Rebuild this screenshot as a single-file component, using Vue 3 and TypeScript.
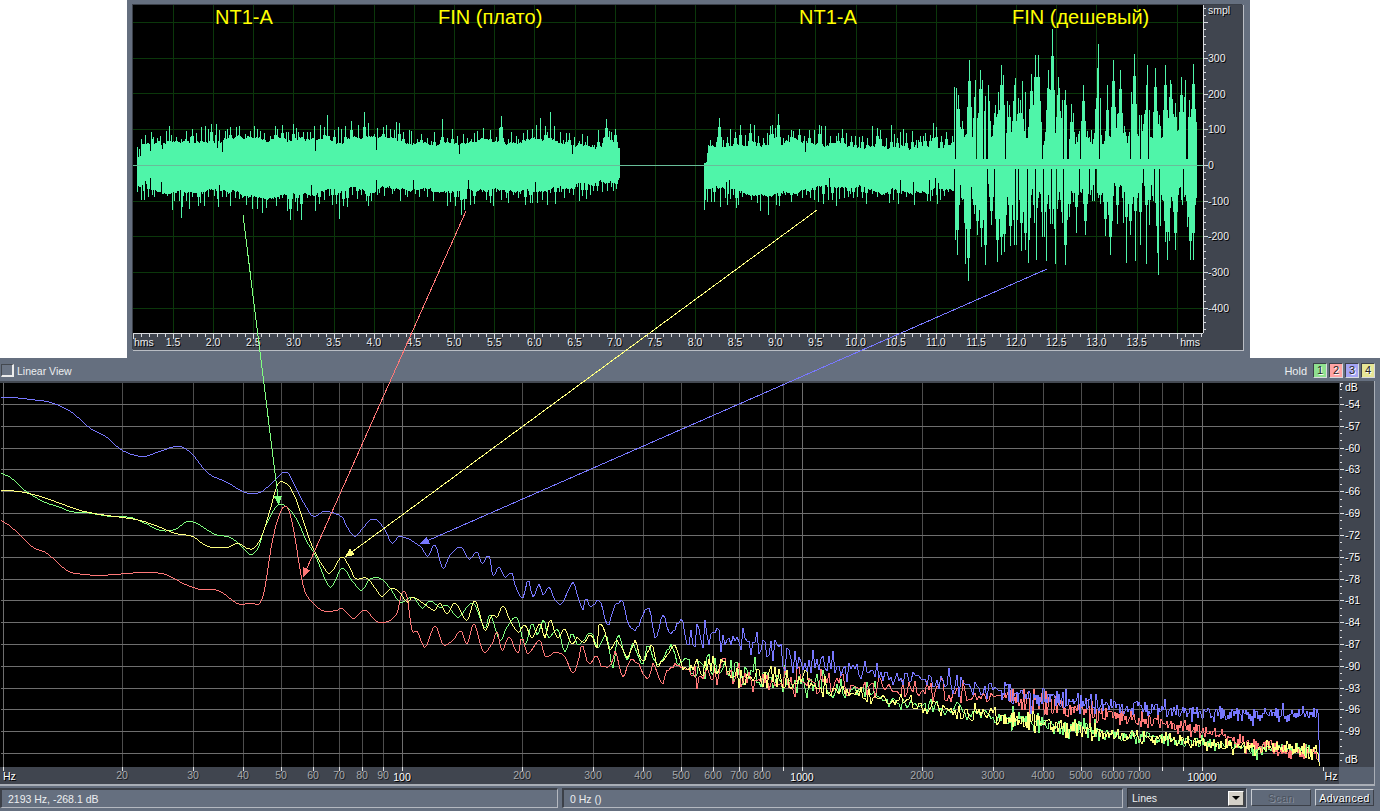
<template>
  <div class="page">
    <section class="wave-window">
      <div class="wave-frame">
        <div class="wave-plot">
          <svg class="fill" viewBox="133 5 1070 328" shape-rendering="crispEdges">
            <path :d="waveGrid" stroke="#0b370b" fill="none" />
            <path :d="wavePath" stroke="#4ff5a9" fill="none" />
            <path d="M133 165.5H1203" stroke="#68bd99" fill="none" />
          </svg>
          <span v-for="t in waveTitles" :key="t.x" class="wave-title" :style="{ left: t.x - 133 + 'px' }">{{ t.text }}</span>
        </div>
        <div class="axis wave-right">
          <svg class="fill" viewBox="1203 5 40 328" shape-rendering="crispEdges">
            <path :d="waveRightTicks" stroke="#d8dade" fill="none" />
          </svg>
          <span class="lbl" style="top: -1px">smpl</span>
          <span v-for="l in waveRightLabels" :key="l.text" class="lbl mid" :style="{ top: l.y - 5 + 'px' }">{{ l.text }}</span>
        </div>
        <div class="axis wave-bottom">
          <svg class="fill" viewBox="133 333 1070 17" shape-rendering="crispEdges">
            <path :d="waveBottomTicks" stroke="#d8dade" fill="none" />
          </svg>
          <span class="lbl" style="left: 1px; top: 3px">hms</span>
          <span v-for="l in waveBottomLabels" :key="l.text" class="lbl center" :style="{ left: l.x - 133 + 'px' }">{{ l.text }}</span>
          <span class="lbl" style="right: 3px; top: 3px">hms</span>
        </div>
        <div class="wave-corner"></div>
      </div>
    </section>

    <section class="spec-window">
      <div class="toolbar">
        <label class="linear"><span class="check"></span>Linear View</label>
        <div class="hold">
          <span class="hold-text">Hold</span>
          <button v-for="b in holdButtons" :key="b.n" class="hold-btn" :class="b.cls">{{ b.n }}</button>
        </div>
      </div>
      <div class="spec-frame">
        <div class="spec-plot">
          <svg class="fill" viewBox="0 383 1339 384" shape-rendering="crispEdges">
            <path :d="specGridMinor" stroke="#4d4d4d" fill="none" />
            <path :d="specGridMajor" stroke="#6e6e6e" fill="none" />
            <polyline v-for="c in curves" :key="c.color" :points="c.points" :stroke="c.color" fill="none" />
          </svg>
        </div>
        <div class="axis spec-right">
          <svg class="fill" viewBox="1339 383 35 384" shape-rendering="crispEdges">
            <path :d="specRightTicks" stroke="#e4e4e4" fill="none" />
          </svg>
          <span class="lbl bright" style="top: -2px">dB</span>
          <span v-for="l in specRightLabels" :key="l.text" class="lbl bright mid" :style="{ top: l.y - 383 + 'px' }">{{ l.text }}</span>
          <span class="lbl bright mid" style="top: 376px">dB</span>
        </div>
        <div class="axis spec-bottom">
          <svg class="fill" viewBox="0 767 1339 17" shape-rendering="crispEdges">
            <path :d="specBottomTicks" stroke="#e4e4e4" fill="none" />
          </svg>
          <span class="lbl bright" style="left: 3px; top: 3px">Hz</span>
          <span
            v-for="l in specBottomLabels"
            :key="l.text"
            class="lbl center"
            :class="l.major ? 'major' : 'dim'"
            :style="{ left: l.x + 'px' }"
          >{{ l.text }}</span>
          <span class="lbl bright center" style="left: 1331px; top: 3px">Hz</span>
        </div>
        <div class="spec-corner"></div>
      </div>
      <div class="status-row">
        <div class="status first">2193 Hz, -268.1 dB</div>
        <div class="status second">0 Hz ()</div>
        <div class="select">
          <span>Lines</span>
          <span class="select-btn"><i></i></span>
        </div>
        <button class="btn scan" disabled>Scan</button>
        <button class="btn adv">Advanced</button>
      </div>
    </section>

    <svg class="arrows" viewBox="0 0 1380 811" shape-rendering="crispEdges">
      <g v-for="a in arrows" :key="a.color">
        <line :x1="a.x1" :y1="a.y1" :x2="a.x2" :y2="a.y2" :stroke="a.color" />
        <polygon :points="arrowHead(a)" :fill="a.color" />
      </g>
    </svg>
  </div>
</template>

<script setup lang="ts">
type Pt = [number, number]
type Arrow = { x1: number; y1: number; x2: number; y2: number; color: string }

function rng(seed: number) {
  let a = seed
  return () => {
    a = (a + 0x6d2b79f5) | 0
    let t = Math.imul(a ^ (a >>> 15), 1 | a)
    t = (t + Math.imul(t ^ (t >>> 7), 61 | t)) ^ t
    return ((t ^ (t >>> 14)) >>> 0) / 4294967296
  }
}

function lerp(keys: Pt[], x: number) {
  if (x <= keys[0][0]) return keys[0][1]
  for (let i = 1; i < keys.length; i++) {
    if (x <= keys[i][0]) {
      const [x0, y0] = keys[i - 1]
      const [x1, y1] = keys[i]
      return y0 + ((y1 - y0) * (x - x0)) / (x1 - x0)
    }
  }
  return keys[keys.length - 1][1]
}

// ---------- waveform ----------
const waveTitles = [
  { x: 215, text: 'NT1-A' },
  { x: 438, text: 'FIN (плато)' },
  { x: 799, text: 'NT1-A' },
  { x: 1012, text: 'FIN (дешевый)' }
]
const waveX = (i: number) => 173 + 40.15 * i
const smplY = [22, 58, 93, 129, 165, 201, 236, 272, 308]

let gridD = ''
for (let i = 0; i <= 25; i++) gridD += `M${Math.round(waveX(i)) + 0.5} 5V333`
for (const y of smplY) gridD += `M133 ${y + 0.5}H1203`
const waveGrid = gridD

// one side of the signal: pointed fingers of random height, laid over each other
function fingers(x0: number, x1: number, height: (x: number) => number, every: number, width: number, r: () => number) {
  const out = new Array(x1 - x0).fill(0)
  let x = x0
  while (x < x1) {
    const h = height(x)
    const w = 1.5 + width * r()
    for (let d = -6; d <= 6; d++) {
      const i = Math.round(x) + d - x0
      if (i < 0 || i >= out.length) continue
      out[i] = Math.max(out[i], h * Math.max(0, 1 - Math.abs(d) / w))
    }
    x += 2 + every * r()
  }
  return out
}

function quietSection(x0: number, x1: number, top: Pt[], bot: Pt[], seed: number) {
  const r = rng(seed)
  let wt = 0
  let wb = 0
  const side = (keys: Pt[]) => (x: number) => {
    const a = lerp(keys, x)
    const c = r()
    return a * (0.72 + 0.38 * r()) * (c < 0.09 ? 1.32 : 1)
  }
  const up = fingers(x0, x1, side(top), 4, 4, r)
  const down = fingers(x0, x1, side(bot), 4, 4, r)
  let d = ''
  for (let x = x0; x < x1; x++) {
    wt = wt * 0.97 + (r() - 0.5) * 3
    wb = wb * 0.97 + (r() - 0.5) * 3
    let t = Math.max(up[x - x0], lerp(top, x) * 0.62 + wt)
    let b = Math.max(down[x - x0], lerp(bot, x) * 0.66 + wb)
    // thin black notches cut into the body now and then
    if (r() < 0.03) t *= 0.55
    if (r() < 0.03) b *= 0.6
    d += `M${x + 0.5} ${Math.round(165 - t)}V${Math.round(165 + b)}`
  }
  return d
}

const topSpikes: Pt[] = [[953, 97], [958, 70], [969, 105], [975, 85], [980, 95], [988, 80], [995, 60], [1001, 100], [1009, 60], [1014, 80], [1020, 65], [1035, 110], [1038, 110], [1048, 95], [1052, 136], [1058, 88], [1065, 75], [1083, 80], [1098, 121], [1113, 105], [1120, 95], [1134, 111], [1147, 100], [1155, 97], [1165, 100], [1170, 85], [1185, 85], [1193, 101]]
const botSpikes: Pt[] = [[955, 75], [968, 116], [977, 70], [985, 100], [1001, 90], [1015, 100], [1025, 85], [1035, 72], [1055, 80], [1065, 100], [1085, 70], [1110, 90], [1130, 70], [1158, 110], [1175, 85], [1190, 95]]

function spikeAt(list: Pt[], x: number, v: number) {
  let out = v
  for (const s of list) {
    const d = Math.abs(x - s[0])
    if (d === 0) out = Math.max(out, s[1])
    else if (d === 1) out = Math.max(out, s[1] * 0.8)
    else if (d === 2) out = Math.max(out, s[1] * 0.55)
  }
  return out
}

function loudSection(x0: number, x1: number, seed: number) {
  const r = rng(seed)
  const up = fingers(x0, x1, () => 34 + 58 * r(), 6, 4, r)
  const down = fingers(x0, x1, () => 34 + 66 * r(), 6, 4, r)
  let d = ''
  for (let x = x0; x < x1; x++) {
    const slitT = r() < 0.06
    const slitB = r() < 0.08
    const t = slitT ? 6 : spikeAt(topSpikes, x, Math.max(up[x - x0], 20 + 14 * r()))
    const b = slitB ? 4 : spikeAt(botSpikes, x, Math.max(down[x - x0], 18 + 18 * r()))
    d += `M${x + 0.5} ${Math.round(165 - t)}V${Math.round(165 + b)}`
  }
  return d
}

const wavePath =
  quietSection(137, 620,
    [[137, 20], [145, 34], [240, 40], [290, 40], [362, 36], [375, 43], [395, 43], [412, 34], [445, 32], [480, 35], [520, 36], [552, 38], [575, 31], [600, 33], [620, 34]],
    [[137, 32], [240, 44], [290, 44], [360, 38], [400, 33], [460, 38], [560, 36], [620, 27]], 11) +
  quietSection(704, 707, [[704, 1], [707, 1]], [[704, 36], [707, 40]], 5) +
  quietSection(707, 954,
    [[707, 30], [742, 38], [800, 37], [860, 35], [900, 38], [954, 36]],
    [[707, 40], [800, 37], [880, 36], [954, 36]], 23) +
  loudSection(954, 1197, 37)

let rightD = 'M1203.5 5V333'
for (let i = -2; i <= 44; i++) {
  const y = Math.round(165 + 7.14 * (i - 20) * 1)
  if (y < 6 || y > 332) continue
  rightD += `M1204 ${y + 0.5}H${(i - 20) % 5 === 0 ? 1208 : 1206}`
}
const waveRightTicks = rightD
const waveRightLabels = [300, 200, 100, 0, -100, -200, -300, -400].map((v) => ({
  text: String(v),
  y: 165 - v * 0.357
}))

let bottomD = 'M133 333.5H1203'
for (let i = -5; i < 130; i++) {
  const x = Math.round(173 + 8.03 * i)
  if (x < 133 || x > 1202) continue
  bottomD += `M${x + 0.5} 334V${i % 5 === 0 ? 339 : 337}`
}
const waveBottomTicks = bottomD
const waveBottomLabels = Array.from({ length: 25 }, (_, i) => ({
  text: (1.5 + i * 0.5).toFixed(1),
  x: waveX(i)
}))

// ---------- spectrum ----------
const decade = [0, 119, 190, 240, 278, 310, 336, 359, 380.5, 399.5]
const hz: { x: number; f: number }[] = [{ x: 3, f: 10 }]
for (let k = 0; k < 3; k++) {
  for (let m = 1; m < 10; m++) {
    hz.push({ x: Math.round(2.8 + decade[m] + k * 400), f: (m + 1) * 10 * 10 ** k })
  }
}
const hidden = [900, 8000, 9000]
const specBottomLabels = hz
  .filter((h) => h.f !== 10 && !hidden.includes(h.f))
  .map((h) => ({ text: String(h.f), x: h.x, major: h.f === 100 || h.f === 1000 || h.f === 10000 }))

const dbY: number[] = []
for (let i = 0; i <= 16; i++) dbY.push(Math.round(404 + 21.82 * i))
let minorD = ''
let majorD = ''
for (const h of hz) {
  const seg = `M${h.x + 0.5} 383V767`
  if (h.f === 100 || h.f === 1000 || h.f === 10000 || h.f === 10) majorD += seg
  else minorD += seg
}
for (const y of dbY) majorD += `M1 ${y + 0.5}H1339`
const specGridMinor = minorD
const specGridMajor = majorD

const specRightLabels = dbY.slice(0, 16).map((y, i) => ({ text: String(-54 - i * 3), y }))
let sr = 'M1340 383.5H1343M1340 383V387'
for (let i = -1; i < 17; i++) {
  const y = 404 + 21.82 * i
  if (i >= 0) sr += `M1340 ${Math.round(y) + 0.5}H1344`
  for (const k of [7.3, 14.6]) {
    const yy = Math.round(y + k)
    if (yy > 384 && yy < 766) sr += `M1340 ${yy + 0.5}H1342`
  }
}
const specRightTicks = sr

let sb = ''
for (const h of hz) sb += `M${h.x + 0.5} 767V771`
sb += 'M1323.5 767V771'
const specBottomTicks = sb

function catmull(keys: Pt[], x: number) {
  let i = 1
  while (i < keys.length - 1 && keys[i][0] < x) i++
  const p0 = keys[Math.max(0, i - 2)]
  const p1 = keys[i - 1]
  const p2 = keys[i]
  const p3 = keys[Math.min(keys.length - 1, i + 1)]
  const w = p2[0] - p1[0]
  const t = Math.min(1, Math.max(0, (x - p1[0]) / w))
  const m1 = ((p2[1] - p0[1]) / (p2[0] - p0[0] || 1)) * w
  const m2 = ((p3[1] - p1[1]) / (p3[0] - p1[0] || 1)) * w
  const t2 = t * t
  const t3 = t2 * t
  return (2 * t3 - 3 * t2 + 1) * p1[1] + (t3 - 2 * t2 + t) * m1 + (-2 * t3 + 3 * t2) * p2[1] + (t3 - t2) * m2
}

function buildCurve(keys: Pt[], noiseFrom: number, base: Pt[], amp: number, seed: number, dropTo: number) {
  const r = rng(seed)
  const pts: string[] = []
  let x = 1
  while (x <= 1318) {
    let y: number
    if (x < noiseFrom) {
      y = catmull(keys, x)
      // bins get denser going right, so the key points pick up a little fuzz
      if (x > 520) y += (r() - 0.5) * 6 * ((x - 520) / (noiseFrom - 520))
    } else {
      const a = amp * (x < 850 ? 1.35 : x < 1100 ? 1 : 0.72)
      const n = (r() + r() - 1) * a * 2.5
      const spike = r() < 0.07 ? (r() < 0.5 ? -1 : 1) * a * 1.3 : 0
      y = lerp(base, x) + n + spike
    }
    pts.push(`${x},${Math.round(y)}`)
    x += x < noiseFrom ? (x > 520 ? 2 : 1) : x < 1000 ? 2 : 1
  }
  pts.push(`1319,${dropTo}`, '1320,766')
  return pts.join(' ')
}

const blueKeys: Pt[] = [[1, 397], [12, 397], [30, 399], [50, 402], [70, 411], [90, 428], [105, 436], [122, 450], [143, 456], [160, 451], [178, 446], [190, 452], [208, 473], [225, 481], [245, 492], [260, 492], [272, 483], [282, 473], [288, 473], [297, 490], [305, 505], [313, 516], [325, 511], [342, 517], [347, 527], [355, 536], [363, 528], [370, 520], [377, 520], [385, 530], [392, 543], [400, 536], [420, 546], [428, 556], [435, 545], [443, 568], [450, 555], [461, 547], [469, 559], [477, 552], [482, 563], [489, 556], [493, 575], [499, 567], [505, 577], [512, 573], [515, 585], [523, 598], [528, 580], [533, 597], [539, 584], [543, 595], [549, 587], [555, 600], [562, 603], [573, 583], [578, 598], [583, 609], [586, 597], [590, 607], [600, 602], [608, 627], [613, 610], [622, 602], [627, 618], [635, 631], [645, 612], [650, 608], [655, 638], [663, 614], [670, 633], [682, 621], [688, 647], [700, 628]]
const blueBase: Pt[] = [[690, 632], [740, 640], [800, 662], [850, 670], [900, 677], [1000, 692], [1100, 705], [1200, 713], [1318, 716]]

const redKeys: Pt[] = [[1, 520], [10, 526], [22, 537], [33, 547], [45, 552], [55, 560], [68, 571], [85, 574], [100, 575], [115, 574], [145, 572], [165, 574], [185, 584], [200, 589], [213, 589], [223, 593], [237, 603], [252, 603], [260, 603], [265, 587], [272, 543], [280, 513], [287, 507], [293, 527], [302, 580], [307, 596], [322, 610], [337, 610], [342, 608], [353, 618], [365, 610], [375, 620], [385, 622], [397, 613], [402, 593], [407, 597], [412, 630], [417, 631], [425, 647], [435, 626], [443, 644], [453, 640], [461, 631], [467, 644], [474, 624], [483, 651], [492, 644], [497, 632], [502, 650], [509, 637], [518, 653], [522, 637], [527, 653], [535, 645], [540, 640], [545, 656], [557, 652], [565, 657], [572, 673], [577, 666], [582, 645], [588, 662], [597, 657], [602, 667], [612, 663], [615, 650], [623, 678], [630, 660], [640, 667], [648, 678], [653, 665], [663, 682], [667, 668], [690, 668], [700, 672]]
const redBase: Pt[] = [[690, 670], [800, 682], [900, 688], [1000, 696], [1040, 703], [1100, 713], [1150, 720], [1200, 732], [1250, 745], [1300, 752], [1318, 752]]

const yellowKeys: Pt[] = [[1, 490], [18, 491], [40, 496], [60, 503], [80, 510], [100, 514], [122, 517], [140, 520], [160, 527], [175, 533], [192, 536], [205, 545], [213, 547], [228, 547], [238, 543], [247, 548], [255, 547], [263, 533], [270, 510], [278, 484], [287, 484], [295, 497], [303, 520], [313, 548], [328, 573], [333, 570], [342, 557], [350, 568], [355, 578], [367, 578], [375, 588], [382, 596], [392, 588], [400, 593], [407, 602], [413, 597], [423, 603], [435, 610], [440, 603], [447, 614], [455, 603], [467, 620], [475, 601], [485, 630], [492, 615], [497, 617], [503, 606], [510, 620], [518, 632], [525, 625], [532, 638], [540, 623], [545, 638], [550, 620], [557, 637], [565, 630], [572, 645], [577, 637], [585, 643], [590, 633], [597, 647], [598, 626], [603, 627], [610, 650], [617, 640], [627, 657], [635, 642], [642, 662], [652, 647], [657, 665], [667, 655], [677, 648], [683, 668], [700, 668]]
const greenKeys: Pt[] = [[1, 473], [10, 477], [22, 488], [32, 495], [45, 502], [60, 507], [70, 511], [85, 512], [110, 516], [130, 517], [145, 523], [160, 530], [175, 529], [190, 521], [215, 534], [230, 537], [240, 545], [250, 554], [258, 548], [265, 527], [278, 505], [288, 508], [297, 520], [307, 542], [315, 555], [328, 585], [333, 585], [342, 568], [353, 582], [362, 590], [370, 579], [380, 578], [390, 588], [400, 602], [413, 597], [422, 608], [430, 601], [440, 607], [447, 605], [458, 617], [473, 603], [485, 628], [490, 615], [500, 640], [507, 627], [517, 618], [525, 645], [532, 623], [537, 635], [544, 620], [548, 637], [558, 630], [565, 652], [572, 633], [578, 645], [592, 633], [597, 647], [607, 637], [613, 668], [618, 634], [627, 660], [633, 643], [642, 663], [648, 647], [658, 665], [672, 645], [678, 663], [690, 657], [700, 668]]
const ygBase: Pt[] = [[690, 664], [800, 682], [900, 702], [1000, 717], [1100, 733], [1160, 739], [1200, 743], [1250, 748], [1300, 750], [1318, 752]]

const curves = [
  { color: '#80ff80', points: buildCurve(greenKeys, 690, ygBase, 4.6, 3, 760) },
  { color: '#ff7878', points: buildCurve(redKeys, 690, redBase, 5.4, 7, 760) },
  { color: '#7878ff', points: buildCurve(blueKeys, 690, blueBase, 5, 13, 740) },
  { color: '#ffff80', points: buildCurve(yellowKeys, 690, ygBase, 4.6, 19, 762) }
]

const holdButtons = [
  { n: 1, cls: 'h1' },
  { n: 2, cls: 'h2' },
  { n: 3, cls: 'h3' },
  { n: 4, cls: 'h4' }
]

// arrows run across both panels, so they live in one overlay
const arrows: Arrow[] = [
  { x1: 243, y1: 215, x2: 279, y2: 505, color: '#80ff80' },
  { x1: 466, y1: 211, x2: 303, y2: 577, color: '#ff7878' },
  { x1: 817, y1: 210, x2: 345, y2: 557, color: '#ffff80' },
  { x1: 1047, y1: 269, x2: 420, y2: 544, color: '#7878ff' }
]

function arrowHead(a: Arrow) {
  const dx = a.x1 - a.x2
  const dy = a.y1 - a.y2
  const len = Math.hypot(dx, dy)
  const ux = dx / len
  const uy = dy / len
  const bx = a.x2 + ux * 9
  const by = a.y2 + uy * 9
  const hw = 4
  return `${a.x2},${a.y2} ${bx - uy * hw},${by + ux * hw} ${bx + uy * hw},${by - ux * hw}`
}
</script>

<style>
html, body { margin: 0; background: #fff; }
</style>

<style scoped>
.page { position: relative; width: 1380px; height: 811px; overflow: hidden; font-family: "Liberation Sans", Arial, sans-serif; font-size: 10.5px; color: #eceef0; }
.fill { position: absolute; left: 0; top: 0; width: 100%; height: 100%; display: block; }
.arrows { position: absolute; left: 0; top: 0; width: 1380px; height: 811px; pointer-events: none; }

.wave-window { box-sizing: border-box; margin-left: 127px; width: 1123px; height: 358px; padding: 5px 7px 8px 6px; background: #656f7f; }
.wave-frame { display: grid; grid-template-columns: 1070px 40px; grid-template-rows: 328px 17px; box-shadow: -1px -1px 0 #3b4049; }
.wave-plot { position: relative; background: #000; overflow: hidden; }
.wave-title { position: absolute; top: 0; font-size: 20px; line-height: 24px; color: #ffff00; white-space: nowrap; }
.axis { position: relative; background: #40454f; }
.wave-right { border-right: 1px solid #b9bdc4; margin-right: -1px; }
.wave-bottom { border-bottom: 1px solid #b9bdc4; margin-bottom: -1px; }
.wave-corner { background: #40454f; border-right: 1px solid #b9bdc4; border-bottom: 1px solid #b9bdc4; margin: 0 -1px -1px 0; }

.lbl { position: absolute; font-size: 10.5px; line-height: 12px; color: #eef0f2; text-shadow: 1px 1px 0 #000; white-space: nowrap; }
.wave-right .lbl { left: 5px; }
.mid { transform: translateY(-50%); }
.center { transform: translateX(-50%); top: 3px; }
.wave-bottom .center { top: 3px; }
.spec-right .lbl { left: 6px; }
.bright { color: #fff; }
.dim { color: #a6a8ac; text-shadow: 1px 1px 0 #1c1e22; top: 2px; }
.major { color: #fff; top: 4px; }

.spec-window { width: 1380px; height: 453px; background: #656f7f; }
.toolbar { height: 23px; box-sizing: border-box; display: flex; align-items: center; justify-content: space-between; padding: 2px 5px 0 1px; }
.linear { display: flex; align-items: center; gap: 3px; }
.check { width: 10px; height: 10px; background: #6b7585; border: 1px solid #43484f; border-right: 2px solid #ececec; border-bottom: 2px solid #ececec; box-sizing: content-box; }
.hold { display: flex; align-items: center; }
.hold-text { margin-right: 6px; font-size: 11px; }
.hold-btn { width: 14px; height: 15px; margin-left: 2px; padding: 0; font: 11px "Liberation Sans", Arial, sans-serif; line-height: 13px; color: #222; text-shadow: 1px 1px 0 #fff; border: 1px solid; border-color: #3c4048 #d8dade #d8dade #3c4048; }
.hold-btn:first-of-type { margin-left: 0; }
.h1 { background: #8fe090; }
.h2 { background: #ffa4a4; }
.h3 { background: #a4a4f4; }
.h4 { background: #e6e696; }

.spec-frame { display: grid; width: 1374px; grid-template-columns: 1339px 35px; grid-template-rows: 2px 384px 17px; border-bottom: 2px solid #a9aeb6; border-right: 1px solid #a9aeb6; box-sizing: content-box; margin-right: 5px; }
.spec-frame::before { content: ""; grid-column: 1 / 3; background: #444952; }
.spec-plot { position: relative; background: #000; }
.spec-corner { background: #586170; }

.status-row { display: flex; gap: 4px; margin-top: 2px; width: 1374px; height: 20px; align-items: stretch; }
.status { box-sizing: border-box; padding: 0 6px; line-height: 18px; border: 1px solid; border-color: #3c4048 #b4b8c0 #b4b8c0 #3c4048; border-width: 2px 1px 1px 2px; font-size: 10.5px; }
.first { width: 558px; }
.second { width: 561px; }
.select { box-sizing: border-box; width: 120px; display: flex; justify-content: space-between; align-items: center; padding: 0 2px 0 4px; background: #40454f; border: 1px solid; border-color: #2f333a #b4b8c0 #b4b8c0 #2f333a; }
.select-btn { width: 16px; height: 15px; background: #d4d0c8; display: flex; align-items: center; justify-content: center; border: 1px solid; border-color: #fff #444 #444 #fff; box-sizing: border-box; }
.select-btn i { width: 0; height: 0; border-left: 4px solid transparent; border-right: 4px solid transparent; border-top: 4px solid #000; }
.btn { box-sizing: border-box; height: 17px; margin-top: 1px; padding: 0; font: 10.5px "Liberation Sans", Arial, sans-serif; letter-spacing: 0.5px; border: 1px solid; border-color: #c8ccd2 #3c4048 #3c4048 #c8ccd2; background: #656f7f; }
.scan { width: 60px; color: #4a515c; text-shadow: 1px 1px 0 #8a92a0; background: #5f6979; }
.adv { width: 59px; color: #fff; text-shadow: 1px 1px 0 #000; }
</style>
